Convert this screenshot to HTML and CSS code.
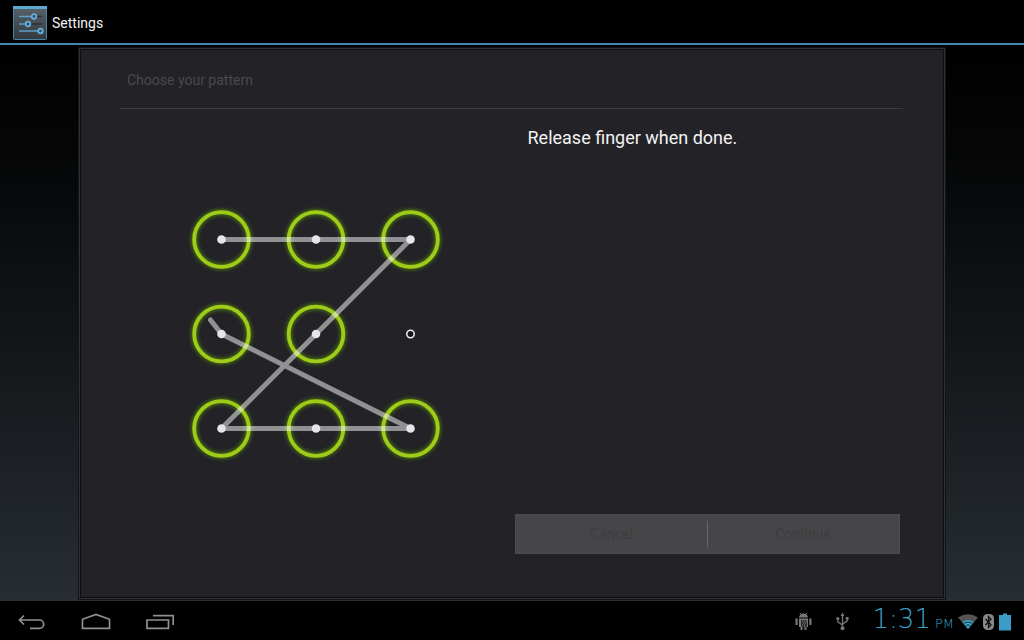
FILE: index.html
```html
<!DOCTYPE html>
<html lang="en">
<head>
  <meta charset="UTF-8">
  <title>Settings</title>
  <link rel="stylesheet" href="styles.css">
</head>
<body>

  <header class="action-bar">
    <svg class="app-icon" viewBox="0 0 34 34" aria-hidden="true">
      <defs>
        <linearGradient id="tile" x1="0" y1="0" x2="0" y2="1">
          <stop offset="0" stop-color="#59636b"/>
          <stop offset="1" stop-color="#33383d"/>
        </linearGradient>
      </defs>
      <rect x="0.5" y="1" width="33" height="32.5" rx="1" fill="url(#tile)" stroke="#4482a8"/>
      <path d="M0 1.5h34" stroke="#5ba9d0" stroke-width="3"/>
      <path d="M24 10.5h5M18 18h11" stroke="#2b3035" stroke-width="1.5"/>
      <path d="M6 10.5h13M6 18h7M6 25h19" stroke="#5b9fc8" stroke-width="1.5"/>
      <g fill="#28506c" stroke="#69b0da" stroke-width="1.7">
        <circle cx="21" cy="10.5" r="2.3"/>
        <circle cx="15" cy="18" r="2.3"/>
        <circle cx="27.5" cy="25" r="2.3"/>
      </g>
    </svg>
    <h1>Settings</h1>
  </header>

  <main class="screen">
    <section class="panel">
      <h2 class="panel-title">Choose your pattern</h2>
      <div class="panel-body">

        <div class="pattern">
          <svg class="pattern-grid" viewBox="0 0 284 284" role="img" aria-label="Unlock pattern">
            <defs>
              <filter id="glow" x="-20%" y="-20%" width="140%" height="140%">
                <feGaussianBlur stdDeviation="2"/>
              </filter>
              <g id="ring">
                <circle r="27.3" fill="none" stroke="#64a800" stroke-width="5" opacity="0.75" filter="url(#glow)"/>
                <circle r="27.3" fill="none" stroke="#9fcb1b" stroke-width="3.8"/>
              </g>
            </defs>
            <use href="#ring" x="47.5" y="47.5"/>
            <use href="#ring" x="142" y="47.5"/>
            <use href="#ring" x="236.5" y="47.5"/>
            <use href="#ring" x="47.5" y="142"/>
            <use href="#ring" x="142" y="142"/>
            <use href="#ring" x="47.5" y="236.5"/>
            <use href="#ring" x="142" y="236.5"/>
            <use href="#ring" x="236.5" y="236.5"/>
            <polyline class="trace" points="47.5,47.5 236.5,47.5 47.5,236.5 236.5,236.5 47.5,142 36.5,128"/>
            <g fill="#e6e6e8">
              <circle cx="47.5" cy="47.5" r="4.3"/>
              <circle cx="142" cy="47.5" r="4.3"/>
              <circle cx="236.5" cy="47.5" r="4.3"/>
              <circle cx="47.5" cy="142" r="4.3"/>
              <circle cx="142" cy="142" r="4.3"/>
              <circle cx="47.5" cy="236.5" r="4.3"/>
              <circle cx="142" cy="236.5" r="4.3"/>
              <circle cx="236.5" cy="236.5" r="4.3"/>
            </g>
            <circle cx="236.5" cy="142" r="3.7" fill="#161618" stroke="#f2f2f2" stroke-width="1.5"/>
          </svg>
        </div>

        <div class="side">
          <p class="message">Release finger when done.</p>
          <div class="button-bar">
            <button type="button" disabled>Cancel</button>
            <button type="button" disabled>Continue</button>
          </div>
        </div>

      </div>
    </section>
  </main>

  <footer class="system-bar">
    <nav class="nav-keys">
      <button type="button" aria-label="Back">
        <svg viewBox="0 0 28 20"><path d="M1.5 7H21.5a4.2 4.2 0 0 1 0 8.4H12M6 2.5L1.5 7L6 11.5"/></svg>
      </button>
      <button type="button" aria-label="Home">
        <svg viewBox="0 0 30 20"><path d="M1.5 15.4V6.3L15 1.5L28.5 6.3V15.4Z"/></svg>
      </button>
      <button type="button" aria-label="Recent apps">
        <svg viewBox="0 0 28 20"><path d="M1 7h21.5v8.4H1ZM7 2.7h20.2v9.3"/></svg>
      </button>
    </nav>
    <div class="status">
      <svg class="debug" viewBox="0 0 17 20" aria-hidden="true">
        <path d="M4 5.5a4.5 4 0 0 1 9 0ZM4 6.5h9V15H4ZM0.5 6.5h2.2V13H0.5ZM14.3 6.5h2.2V13h-2.2ZM5.5 15h2v3h-2ZM9.5 15h2v3h-2Z" fill="#777"/>
        <path d="M5 .8L6.2 2.5M12 .8L10.8 2.5" stroke="#777"/>
        <path d="M6 8h6v6l-2 2H8l-2-2Z" fill="#2a2a2a"/>
        <path d="M7 9h1M9 9h1M11 9h1M8 11h1M10 11h1M7 13h1M9 13h1M9 15h1" stroke="#8a8a8a"/>
      </svg>
      <svg class="usb" viewBox="0 0 13 20" aria-hidden="true">
        <path d="M6.5 3v13M1.8 6.5v3.2l4.7 3.4M11.2 6.5v2.4l-4.7 3.2" fill="none" stroke="#777" stroke-width="1.3"/>
        <path d="M4.5 4L6.5 .5L8.5 4Z" fill="#777"/>
        <circle cx="6.5" cy="16.2" r="2" fill="#777"/>
        <circle cx="1.8" cy="6.5" r="1.6" fill="#777"/>
        <path d="M9.8 5h2.8v2.8H9.8Z" fill="#777"/>
      </svg>
      <time class="clock" datetime="13:31">1:31<span>PM</span></time>
      <svg class="wifi" viewBox="0 0 20 18" aria-hidden="true">
        <path d="M0 4.5Q10-2 20 4.5L10 16Z" fill="#555"/>
        <path d="M4.5 9Q10 5 15.5 9L10 16Z" fill="#3aa3cc"/>
        <path d="M6 10.2Q10 7.5 14 10.2M8 12.5q2-1.2 4 0" fill="none" stroke="#123442"/>
      </svg>
      <svg class="bluetooth" viewBox="0 0 11 18" aria-hidden="true">
        <rect y="1" width="11" height="16" rx="4.5" fill="#888"/>
        <path d="M2.5 6L8 11.8L5.5 14.5V3.5L8 6.2L2.5 12" fill="none" stroke="#0b0b0b" stroke-width="1.2"/>
      </svg>
      <svg class="battery" viewBox="0 0 12 18" aria-hidden="true">
        <path d="M4 .5h4V2h4v15.5H0V2h4Z" fill="#3b9dc6"/>
      </svg>
    </div>
  </footer>

</body>
</html>
```
FILE: styles.css
```css
:root {
  --holo: #4189b0;
  --clock: #3aa3cc;
  --panel: #232227;
  --key: #909090;
}

* {
  box-sizing: border-box;
}

body {
  margin: 0;
  min-height: 100vh;
  display: flex;
  flex-direction: column;
  background: #000;
  color: #f3f3f3;
  font-family: Roboto, "Liberation Sans", sans-serif;
}

h1, h2, p {
  margin: 0;
  font-weight: 400;
}

/* top bar */
.action-bar {
  display: flex;
  align-items: center;
  gap: 5px;
  height: 45px;
  padding: 2px 13px 0;
  border-bottom: 2px solid var(--holo);
}

.app-icon {
  width: 34px;
  height: 34px;
}

.action-bar h1 {
  font-size: 14px;
}

/* dialog panel */
.screen {
  flex: 1;
  display: flex;
  padding: 3px 79px 2px;
  background: linear-gradient(#000, #070809 25%, #272d33);
}

.panel {
  flex: 1;
  display: flex;
  flex-direction: column;
  padding: 0 41px 40px 40px;
  background: var(--panel);
  border: 1px solid #303336;
  box-shadow: inset 0 0 0 1px #0c0d0f, 0 0 0 1px #111315;
}

.panel-title {
  height: 60px;
  padding: 0 7px;
  border-bottom: 1px solid #3d3d40;
  color: #4a4a4c;
  font-size: 14px;
  line-height: 62px;
}

.panel-body {
  flex: 1;
  display: grid;
  grid-template-columns: 1fr 1fr;
}

.pattern {
  display: flex;
  align-items: center;
  justify-content: center;
}

.pattern-grid {
  width: 284px;
  height: 284px;
}

.trace {
  fill: none;
  stroke: #fff;
  stroke-opacity: 0.5;
  stroke-width: 5;
  stroke-linecap: round;
  stroke-linejoin: round;
}

.side {
  display: flex;
  flex-direction: column;
  justify-content: space-between;
  padding: 16px 3px 4px;
}

.message {
  padding: 0 13px;
  font-size: 18px;
  line-height: 26px;
}

.button-bar {
  display: flex;
  height: 40px;
  background: #464648;
  border: 1px solid #4c4c4e;
}

.button-bar button {
  flex: 1;
  position: relative;
  padding: 0;
  border: 0;
  background: none;
  color: #3d3d3f;
  font: 14px Roboto, "Liberation Sans", sans-serif;
}

/* short divider between the two buttons */
.button-bar button + button::before {
  content: "";
  position: absolute;
  left: 0;
  top: 6px;
  bottom: 6px;
  width: 1px;
  background: #666668;
}

/* bottom bar */
.system-bar {
  display: flex;
  align-items: center;
  justify-content: space-between;
  height: 39px;
  padding: 2px 13px 0 16px;
}

.nav-keys {
  display: flex;
  gap: 32px;
}

.nav-keys button {
  display: flex;
  justify-content: center;
  width: 32px;
  padding: 2px 0 0;
  border: 0;
  background: none;
}

.nav-keys svg {
  height: 20px;
  fill: none;
  stroke: var(--key);
  stroke-width: 1.7;
}

.status {
  display: flex;
  align-items: center;
}

.debug {
  width: 17px;
  height: 20px;
  margin-right: 24px;
}

.usb {
  width: 13px;
  height: 20px;
  margin-right: 24px;
}

.clock {
  margin-right: 4px;
  color: var(--clock);
  font-family: "DejaVu Sans", sans-serif;
  font-size: 26px;
  font-weight: 200;
  line-height: 24px;
}

.clock span {
  margin-left: 4px;
  font-size: 13px;
}

.wifi {
  width: 20px;
  height: 18px;
  margin-right: 5px;
}

.bluetooth {
  width: 11px;
  height: 18px;
  margin-right: 5px;
}

.battery {
  width: 12px;
  height: 18px;
}
```
